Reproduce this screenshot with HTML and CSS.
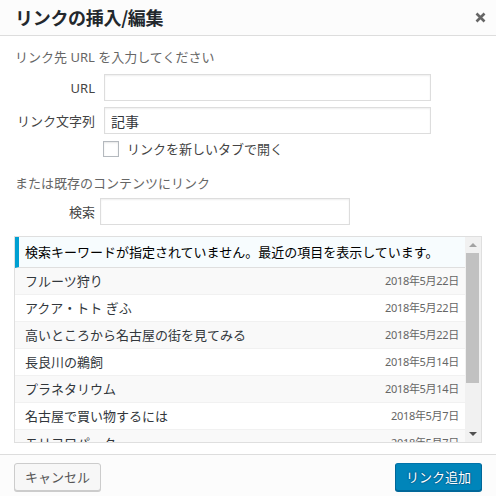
FILE: index.html
```html
<!DOCTYPE html>
<html lang="ja">
<head>
<meta charset="utf-8">
<title>リンクの挿入/編集</title>
<link rel="stylesheet" href="styles.css">
</head>
<body>
<div class="dialog">
  <div class="header">
    <h1 class="title">リンクの挿入/編集</h1>
    <span class="close" aria-label="閉じる">
      <svg width="11" height="11" viewBox="0 0 11 11"><path d="M1.5 1.5 L9.5 9.5 M9.5 1.5 L1.5 9.5" stroke="#666" stroke-width="2.6" stroke-linecap="butt"/></svg>
    </span>
  </div>
  <div class="body">
    <p class="howto first">リンク先 URL を入力してください</p>
    <div class="field">
      <span class="lbl">URL</span>
      <input class="txt wide" type="text" value="">
    </div>
    <div class="field gap">
      <span class="lbl">リンク文字列</span>
      <input class="txt wide" type="text" value="記事">
    </div>
    <div class="check-row">
      <span class="checkbox"></span>
      <span class="check-label">リンクを新しいタブで開く</span>
    </div>
    <p class="howto second">または既存のコンテンツにリンク</p>
    <div class="field gap">
      <span class="lbl search-lbl">検索</span>
      <input class="txt search" type="text" value="">
    </div>
    <div class="results">
      <div class="list">
        <div class="notice">検索キーワードが指定されていません。最近の項目を表示しています。</div>
        <ul class="items">
          <li class="item alt"><span class="item-title">フルーツ狩り</span><span class="item-info">2018年5月22日</span></li>
          <li class="item"><span class="item-title">アクア・トト ぎふ</span><span class="item-info">2018年5月22日</span></li>
          <li class="item alt"><span class="item-title">高いところから名古屋の街を見てみる</span><span class="item-info">2018年5月22日</span></li>
          <li class="item"><span class="item-title">長良川の鵜飼</span><span class="item-info">2018年5月14日</span></li>
          <li class="item alt"><span class="item-title">プラネタリウム</span><span class="item-info">2018年5月14日</span></li>
          <li class="item"><span class="item-title">名古屋で買い物するには</span><span class="item-info">2018年5月7日</span></li>
          <li class="item alt"><span class="item-title">モリコロパーク</span><span class="item-info">2018年5月7日</span></li>
        </ul>
      </div>
      <div class="scrollbar">
        <div class="sb-btn"><span class="arrow-up"></span></div>
        <div class="sb-track"><div class="sb-thumb"></div></div>
        <div class="sb-btn"><span class="arrow-down"></span></div>
      </div>
    </div>
  </div>
  <div class="footer">
    <span class="button">キャンセル</span>
    <span class="button primary">リンク追加</span>
  </div>
</div>
</body>
</html>
```
FILE: styles.css
```css
* { box-sizing: border-box; }
html, body { margin: 0; padding: 0; }
body {
  width: 496px;
  height: 496px;
  overflow: hidden;
  background: #fff;
  font-family: "Noto Sans", "Noto Sans CJK JP", sans-serif;
  font-size: 13px;
  color: #444;
}
.dialog {
  width: 496px;
  height: 496px;
  display: flex;
  flex-direction: column;
  background: #fff;
}
.header {
  height: 36px;
  flex: none;
  background: #fcfcfc;
  border-bottom: 1px solid #ddd;
  display: flex;
  align-items: center;
  justify-content: space-between;
  padding: 0 10px 0 15px;
}
.title {
  margin: 0;
  font-family: "Noto Sans CJK JP", sans-serif;
  font-size: 18px;
  font-weight: 700;
  line-height: 35px;
  color: #23282d;
  letter-spacing: -0.3px;
}
.close {
  display: flex;
  width: 11px;
  height: 11px;
  margin-top: -1px;
}
.body {
  flex: 1;
  min-height: 0;
  padding: 0 14px;
}
.howto {
  margin: 0;
  font-size: 13px;
  line-height: 18px;
  color: #666;
  padding-left: 1px;
}
.howto.first { margin-top: 12px; }
.howto.second { margin-top: 16px; }
.field {
  display: flex;
  align-items: center;
  margin-top: 8px;
}
.field.gap { margin-top: 6px; }
.lbl {
  width: 81px;
  text-align: right;
  margin-right: 9px;
  font-size: 13px;
  color: #444;
  line-height: 18px;
}
.search-lbl { margin-right: 5px; }
.txt {
  height: 27px;
  border: 1px solid #ddd;
  box-shadow: inset 0 1px 2px rgba(0,0,0,.07);
  background: #fff;
  font-family: "Noto Sans", "Noto Sans CJK JP", sans-serif;
  font-size: 14px;
  color: #32373c;
  padding: 0 6px;
  margin: 0;
  outline: none;
  border-radius: 0;
}
.txt.wide { width: 327px; }
.txt.search { width: 250px; }
.check-row {
  display: flex;
  align-items: center;
  height: 18px;
  margin-top: 6px;
  padding-left: 89px;
}
.checkbox {
  width: 16px;
  height: 16px;
  border: 1px solid #b4b9be;
  background: #fff;
  box-shadow: inset 0 1px 2px rgba(0,0,0,.1);
  margin-right: 8px;
}
.check-label {
  font-size: 13px;
  line-height: 18px;
  color: #444;
}
.results {
  margin-top: 11px;
  height: 207px;
  border: 1px solid #dfdfdf;
  display: flex;
  overflow: hidden;
  background: #fff;
}
.list {
  flex: 1;
  min-width: 0;
  overflow: hidden;
}
.notice {
  background: #f7fcfe;
  border-left: 4px solid #00a0d2;
  border-bottom: 1px solid #dfdfdf;
  padding: 6px;
  line-height: 18px;
  font-size: 13px;
  color: #000;
  white-space: nowrap;
}
.items {
  list-style: none;
  margin: 0;
  padding: 0;
}
.item {
  display: flex;
  align-items: center;
  justify-content: space-between;
  padding: 4px 6px 4px 10px;
  height: 27px;
  border-bottom: 1px solid #f1f1f1;
  color: #32373c;
  font-size: 13px;
  line-height: 18px;
}
.item.alt { background: #f9f9f9; }
.item-title { white-space: nowrap; }
.item-info {
  font-size: 11px;
  color: #666;
  white-space: nowrap;
  letter-spacing: -0.3px;
}
.scrollbar {
  width: 16px;
  flex: none;
  background: #f1f1f1;
  display: flex;
  flex-direction: column;
}
.sb-btn {
  height: 16px;
  flex: none;
  display: flex;
  align-items: center;
  justify-content: center;
}
.arrow-up {
  width: 0; height: 0;
  border-left: 4px solid transparent;
  border-right: 4px solid transparent;
  border-bottom: 4px solid #a3a3a3;
}
.arrow-down {
  width: 0; height: 0;
  border-left: 4px solid transparent;
  border-right: 4px solid transparent;
  border-top: 4px solid #505050;
}
.sb-track {
  flex: 1;
}
.sb-thumb {
  height: 130px;
  margin: 0 2px 0 1px;
  background: #c1c1c1;
}
.footer {
  flex: none;
  height: 42px;
  background: #fcfcfc;
  border-top: 1px solid #ddd;
  padding: 8px 14px 0;
  display: flex;
  justify-content: space-between;
  align-items: flex-start;
}
.button {
  display: inline-flex;
  align-items: center;
  justify-content: center;
  height: 28px;
  padding: 0 10px 1px;
  border-radius: 3px;
  border: 1px solid #ccc;
  background: #f7f7f7;
  box-shadow: 0 1px 0 #ccc;
  color: #555;
  font-size: 13px;
  line-height: 26px;
  font-family: "Noto Sans CJK JP", sans-serif;
}
.button.primary {
  background: #0085ba;
  border-color: #0073aa #006799 #006799;
  box-shadow: 0 1px 0 #006799;
  color: #fff;
  text-shadow: 0 -1px 1px #006799, 1px 0 1px #006799, 0 1px 1px #006799, -1px 0 1px #006799;
}
```
